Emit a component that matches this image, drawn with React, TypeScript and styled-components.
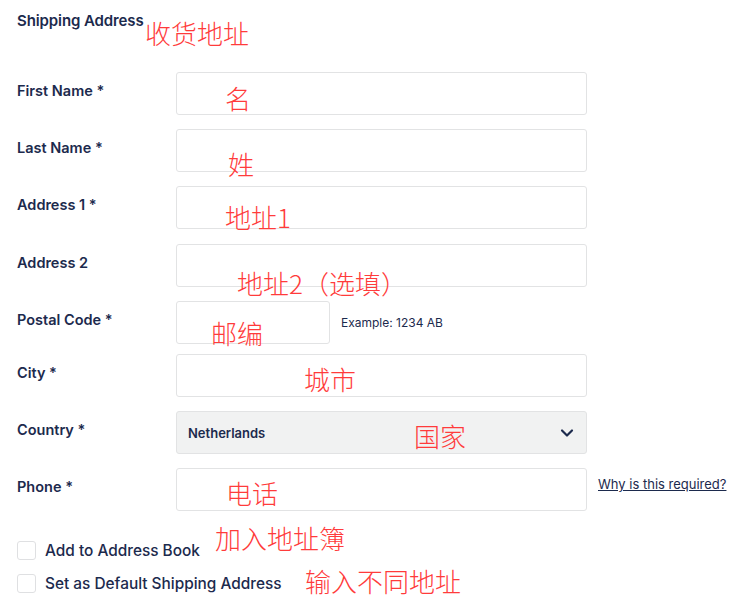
import React from 'react'
import styled, { createGlobalStyle } from 'styled-components'
import { ChevronDown } from 'lucide-react'

const GlobalStyle = createGlobalStyle`
body {
  margin:0;
  background:#fff;
  font-family:Inter, "Noto Sans", sans-serif;
  color:#1c2a4d;
}
`

const Page = styled.div`
position:relative;
width:742px;
height:610px;
padding:12px 0 0 17px;
box-sizing:border-box;
`

const Title = styled.h2`
margin:0;
font-size:15px;
font-weight:600;
line-height:18px;
letter-spacing:-0.1px;
`

const Form = styled.div`
display:flex;
flex-direction:column;
gap:14px;
margin-top:42px;
`

const Row = styled.div<{ $extra?: number }>`
display:flex;
align-items:flex-start;
margin-bottom:${(p) => p.$extra || 0}px;
`

const Label = styled.div`
width:159px;
flex-shrink:0;
padding-top:10px;
font-size:14.5px;
font-weight:600;
line-height:17px;
`

const Field = styled.div<{ $width?: number }>`
width:${(p) => p.$width || 411}px;
height:43px;
box-sizing:border-box;
border:1px solid #e2e3e4;
border-radius:3px;
background:#fff;
`

const Select = styled(Field)`
display:flex;
align-items:center;
justify-content:space-between;
padding:0 9px 0 11px;
background:#f1f2f2;
font-size:13px;
font-weight:600;
`

const Hint = styled.span`
margin-left:11px;
align-self:center;
font-size:12px;
color:#1c2a4d;
`

const HelpLink = styled.a`
margin-left:11px;
padding-top:8px;
font-size:13px;
color:#1c2a4d;
text-decoration:underline;
`

const Checks = styled.div`
display:flex;
flex-direction:column;
gap:14px;
margin-top:30px;
`

const CheckRow = styled.label`
display:flex;
align-items:center;
gap:9px;
font-size:15.4px;
font-weight:500;
line-height:19px;
`

const Box = styled.span`
width:19px;
height:19px;
box-sizing:border-box;
border:1px solid #dfe0e2;
border-radius:3px;
background:#fff;
`

const Note = styled.span<{ $x: number; $y: number }>`
position:absolute;
left:${(p) => p.$x}px;
top:${(p) => p.$y}px;
font-family:"Noto Sans CJK SC", sans-serif;
font-weight:300;
font-size:26px;
line-height:1;
color:#ff3b3b;
white-space:nowrap;
`

const fields = [
  { label: 'First Name *', extra: 0 },
  { label: 'Last Name *', extra: 0 },
  { label: 'Address 1 *', extra: 1 },
  { label: 'Address 2', extra: 0 },
]

const notes = [
  { text: '收货地址', x: 145, y: 20 },
  { text: '名', x: 225, y: 85 },
  { text: '姓', x: 228, y: 151 },
  { text: '地址1', x: 225, y: 204 },
  { text: '地址2（选填）', x: 237, y: 270 },
  { text: '邮编', x: 211, y: 320 },
  { text: '城市', x: 304, y: 366 },
  { text: '国家', x: 414, y: 423 },
  { text: '电话', x: 226, y: 480 },
  { text: '加入地址簿', x: 215, y: 525 },
  { text: '输入不同地址', x: 305, y: 568 },
]

const App = () => {
  return (
    <>
      <GlobalStyle />
      <Page>
        <Title>Shipping Address</Title>
        <Form>
          {fields.map((f) => (
            <Row key={f.label} $extra={f.extra}>
              <Label>{f.label}</Label>
              <Field />
            </Row>
          ))}
          <Row $extra={-4}>
            <Label>Postal Code *</Label>
            <Field $width={154} />
            <Hint>Example: 1234 AB</Hint>
          </Row>
          <Row>
            <Label>City *</Label>
            <Field />
          </Row>
          <Row>
            <Label>Country *</Label>
            <Select>
              <span>Netherlands</span>
              <ChevronDown size={20} strokeWidth={2.6} />
            </Select>
          </Row>
          <Row>
            <Label>Phone *</Label>
            <Field />
            <HelpLink href="#">Why is this required?</HelpLink>
          </Row>
        </Form>
        <Checks>
          <CheckRow>
            <Box />
            Add to Address Book
          </CheckRow>
          <CheckRow>
            <Box />
            Set as Default Shipping Address
          </CheckRow>
        </Checks>
        {notes.map((n) => (
          <Note key={n.text} $x={n.x} $y={n.y}>
            {n.text}
          </Note>
        ))}
      </Page>
    </>
  )
}

export default App
